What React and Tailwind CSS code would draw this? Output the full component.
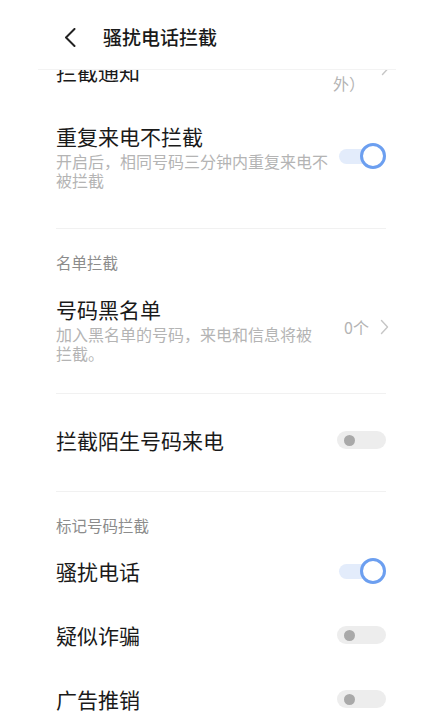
import React from "react";

const font = { fontFamily: '"Noto Sans CJK SC", "Noto Sans", sans-serif' };

function ToggleOn() {
  return (
    <div className="relative w-[47px] h-[26px] flex items-center shrink-0">
      <div className="w-[45px] h-[15px] rounded-full bg-[#e3ecfb]" />
      <div className="absolute right-0 top-0 w-[26px] h-[26px] rounded-full bg-white border-[3px] border-[#6c9ff0]" />
    </div>
  );
}

function ToggleOff() {
  return (
    <div className="w-[49px] h-[18px] rounded-full bg-[#ededed] flex items-center pl-[7px] shrink-0">
      <div className="w-[11px] h-[11px] rounded-full bg-[#a9a9a9]" />
    </div>
  );
}

function Chevron({ className = "" }) {
  return (
    <svg width="9" height="16" viewBox="0 0 9 16" className={className} fill="none">
      <path d="M1.5 1.5 L7.5 8 L1.5 14.5" stroke="#c6c6c6" strokeWidth="1.4" strokeLinecap="round" strokeLinejoin="round" />
    </svg>
  );
}

function Divider({ mt }) {
  return <div className={`h-px bg-[#f1f1f1] ${mt}`} />;
}

export default function App() {
  return (
    <div className="w-[434px] h-[723px] bg-white flex flex-col overflow-hidden" style={font}>
      {/* Header */}
      <div className="h-[70px] shrink-0 bg-white relative z-10 flex flex-col">
        <div className="flex-1 flex items-center pl-[64px] pt-[5px]">
          <svg width="12" height="19" viewBox="0 0 12 19" fill="none">
            <path d="M10.5 1 L2 9.5 L10.5 18" stroke="#222" strokeWidth="2" strokeLinecap="round" strokeLinejoin="round" />
          </svg>
          <span className="ml-[27px] text-[19px] leading-[26px] font-medium text-[#1a1a1a]">
            骚扰电话拦截
          </span>
        </div>
        <div className="h-px bg-[#f3f3f3] mx-[38px]" />
      </div>

      {/* Scrolled content */}
      <div className="flex-1 overflow-hidden">
        <div className="pl-[56px] pr-[48px]">
          {/* Row A (partially scrolled away) */}
          <div className="mt-[-14px] flex justify-between items-start">
            <div className="text-[21px] leading-[30px] text-[#1a1a1a]">拦截通知</div>
            <div className="flex items-start gap-[16px] mr-[-4px] mt-[-9px]">
              <div className="text-[16px] leading-[24px] text-[#b4b4b4] text-right">
                <div>（除联系人</div>
                <div>外）</div>
              </div>
              <Chevron className="mt-[13px]" />
            </div>
          </div>

          {/* Row B */}
          <div className="mt-[27px] flex justify-between items-center">
            <div className="w-[274px]">
              <div className="text-[21px] leading-[28px] text-[#1a1a1a]">重复来电不拦截</div>
              <div className="mt-[2px] text-[16px] leading-[19px] text-[#b4b4b4]">
                开启后，相同号码三分钟内重复来电不被拦截
              </div>
            </div>
            <ToggleOn />
          </div>

          <Divider mt="mt-[38px]" />

          <div className="mt-[23px] text-[15.5px] leading-[20px] text-[#8c8c8c]">名单拦截</div>

          {/* Row C */}
          <div className="mt-[23px] flex justify-between items-center">
            <div className="w-[258px]">
              <div className="text-[21px] leading-[28px] text-[#1a1a1a]">号码黑名单</div>
              <div className="mt-[2px] text-[16px] leading-[19px] text-[#b4b4b4]">
                加入黑名单的号码，来电和信息将被拦截。
              </div>
            </div>
            <div className="flex items-center gap-[11px] mr-[-3px] mt-[-4px]">
              <span className="text-[16px] leading-[20px] text-[#b4b4b4]">0个</span>
              <Chevron />
            </div>
          </div>

          <Divider mt="mt-[30px]" />

          {/* Row D */}
          <div className="mt-[32px] flex justify-between items-center">
            <div className="text-[21px] leading-[28px] text-[#1a1a1a]">拦截陌生号码来电</div>
            <ToggleOff />
          </div>

          <Divider mt="mt-[37px]" />

          <div className="mt-[23px] text-[15.5px] leading-[20px] text-[#8c8c8c]">标记号码拦截</div>

          <div className="mt-[22px] flex justify-between items-center">
            <div className="text-[21px] leading-[28px] text-[#1a1a1a]">骚扰电话</div>
            <ToggleOn />
          </div>

          <div className="mt-[36px] flex justify-between items-center">
            <div className="text-[21px] leading-[28px] text-[#1a1a1a]">疑似诈骗</div>
            <ToggleOff />
          </div>

          <div className="mt-[36px] flex justify-between items-center">
            <div className="text-[21px] leading-[28px] text-[#1a1a1a]">广告推销</div>
            <ToggleOff />
          </div>
        </div>
      </div>
    </div>
  );
}
